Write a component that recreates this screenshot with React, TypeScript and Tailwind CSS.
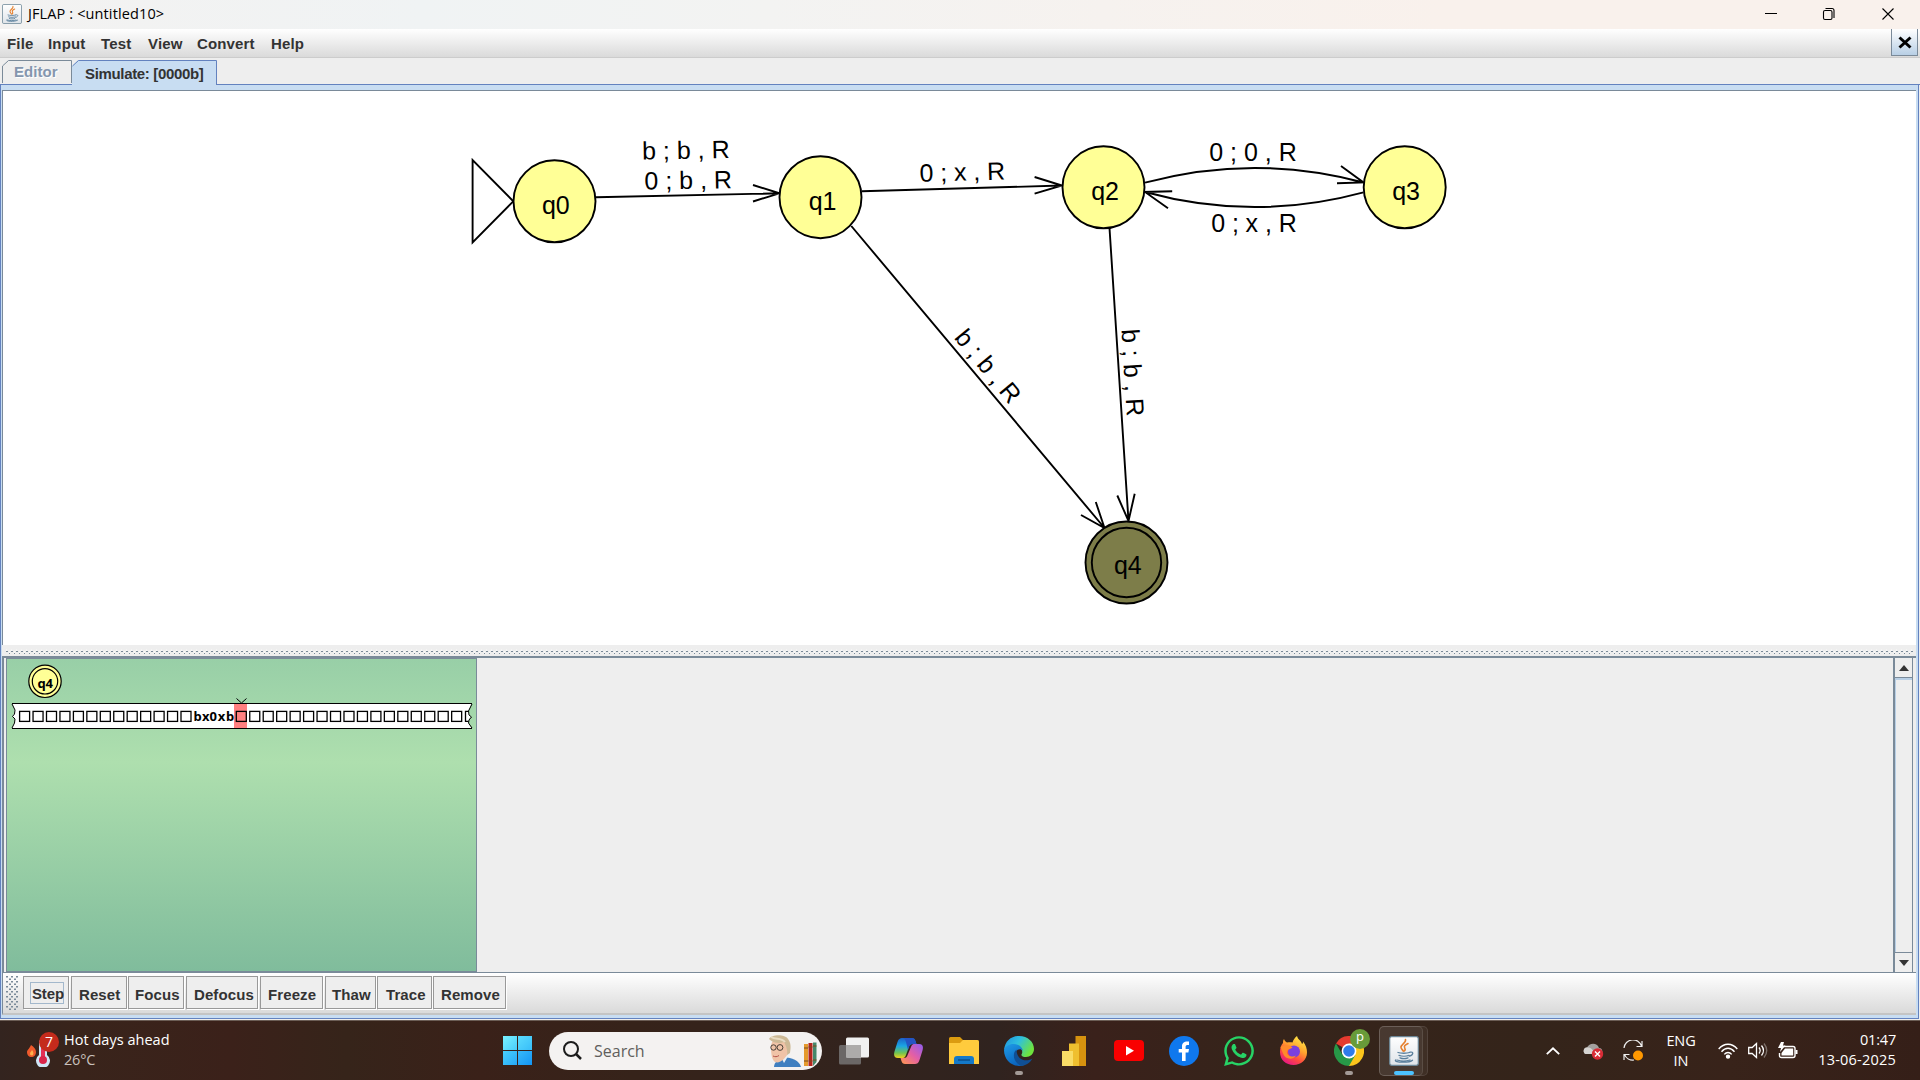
import React from "react";
import { FaWhatsapp } from "react-icons/fa";

type Line = { x: number; y: number; a?: number; w?: number; t: string };

const menus: { t: string; w: string }[] = [
  { t: "File", w: "w-[41px]" },
  { t: "Input", w: "w-[53px]" },
  { t: "Test", w: "w-[47px]" },
  { t: "View", w: "w-[49px]" },
  { t: "Convert", w: "w-[74px]" },
  { t: "Help", w: "w-[50px]" },
];

const labels: Line[] = [
  { t: "b ; b , R", x: 642.2, y: 159.5, a: -1 },
  { t: "0 ; b , R", x: 644.6, y: 189.6, a: -1 },
  { t: "0 ; x , R", x: 919.8, y: 181.8, a: -1.6, w: 85.5 },
  { t: "0 ; 0 , R", x: 1209.2, y: 161.3 },
  { t: "0 ; x , R", x: 1211.2, y: 232, w: 85.5 },
  { t: "b ; b , R", x: 953.5, y: 338, a: 50.2 },
  { t: "b ; b , R", x: 1121.4, y: 329.5, a: 86.4 },
];

const states = [
  { t: "q0", x: 554.5, y: 201.3, tx: 542, ty: 213.7 },
  { t: "q1", x: 820.5, y: 197.2, tx: 808.8, ty: 209.7 },
  { t: "q2", x: 1103.5, y: 187.3, tx: 1091.3, ty: 199.7 },
  { t: "q3", x: 1404.7, y: 187.3, tx: 1392.3, ty: 199.7 },
];

function Diagram() {
  return (
    <svg className="block h-full w-full" viewBox="3 91 1912 554" preserveAspectRatio="xMinYMin" fontFamily="Liberation Sans, Arial, sans-serif" fontSize="25">
      <g fill="none" stroke="#000" strokeWidth="1.9">
        <path d="M472.6 160V242.5L513.3 201.3Z" />
        <path d="M596 197.3 779.5 193.3M753 185l26.5 8.3L753 201.5" />
        <path d="M862 191.3 1062 185.5M1034.6 177l27.4 8.5-27.4 8.2" />
        <path d="M1145 182.7Q1254 153.3 1363.5 182.5M1341 166l22.5 16.5L1337 183.3" />
        <path d="M1363.5 192.3Q1254 222 1145 192M1168 208.3 1145 192l27.2-.7" />
        <path d="M851.3 226 1104.5 528M1081 515l23.500 13-8.700-26" />
        <path d="M1109.5 228 1128.5 521M1117.3 495.5l11.2 25.5 6.2-27.3" />
        {states.map((s) => (
          <circle key={s.t} cx={s.x} cy={s.y} r="41" fill="#ffff96" />
        ))}
        <circle cx="1126.5" cy="562.5" r="41" fill="#7d7d49" />
        <circle cx="1126.5" cy="562.5" r="34.7" />
      </g>
      {states.map((s) => (
        <text key={s.t} x={s.tx} y={s.ty} textLength="27.600">{s.t}</text>
      ))}
      <text x="1114" y="574" textLength="27.600">q4</text>
      {labels.map((l, i) => (
        <text key={i} transform={`translate(${l.x} ${l.y}) rotate(${l.a ?? 0})`} textLength={l.w ?? 87.5}>
          {l.t}
        </text>
      ))}
    </svg>
  );
}

function Tape() {
  const before = Array.from({ length: 13 }, (_, i) => 12.5 + i * 13.45);
  const after = Array.from({ length: 17 }, (_, i) => 229.3 + i * 13.46);
  const word: [string, number][] = [["b", 186.5], ["x", 195], ["0", 202.6], ["x", 210.8], ["b", 219]];
  return (
    <svg className="block h-[80px] w-[469px]" viewBox="0 0 469 80">
      <circle cx="38" cy="22.3" r="16.2" fill="#ffff96" stroke="#000" strokeWidth="1.2" />
      <circle cx="38" cy="22.3" r="12.7" fill="none" stroke="#000" strokeWidth="1.2" />
      <text x="30.5" y="28.700" fontFamily="Noto Sans, sans-serif" fontWeight="700" fontSize="13" textLength="15.5">q4</text>
      <path d="M5.5 44.5H464.5L461.5 52 462.5 56 464 58 462 60 461.5 64 464.5 69.5H5L8 62 7.5 59 5.5 57 7.5 54V50Z" fill="#fff" />
      <rect x="227" y="45" width="13" height="24" fill="#ff8080" />
      <path d="M229.5 39.5l5 4.5 5-4.5" fill="none" stroke="#000" />
      <g fill="none" stroke="#000" strokeWidth="1.3">
        {before.map((x) => (
          <rect key={x} x={x + 0.1} y="52.4" width="10" height="10" />
        ))}
        {after.map((x) => (
          <rect key={x} x={x} y="52.4" width="10" height="10" />
        ))}
        <path d="M461.5 52.400H458.500v10H461.500" />
      </g>
      <path d="M465 45 461.5 52 462 56 464.5 58 462 61 461.5 64 465 69" fill="none" stroke="#000" />
      <path d="M5 45 8 51 7.5 55 5.5 57.5 8 60 7.5 64 5 69" fill="none" stroke="#000" />
      <path d="M5 44.5H465M5 69.5H465" stroke="#000" strokeWidth="1.2" />
      <g fontFamily="Noto Sans, sans-serif" fontWeight="700" fontSize="13">
        {word.map(([c, x]) => (
          <text key={x} x={x} y="62.2">{c}</text>
        ))}
      </g>
    </svg>
  );
}

function JavaCup({ className }: { className: string }) {
  return (
    <svg className={className} viewBox="0 0 30 30">
      <defs>
        <linearGradient id="jv" x2="0" y2="1">
          <stop stopColor="#fff" />
          <stop offset="1" stopColor="#dfe4e9" />
        </linearGradient>
      </defs>
      <rect x=".7" y=".7" width="28.6" height="28.6" rx="2" fill="url(#jv)" stroke="#6c8797" strokeWidth="1.2" />
      <g fill="none" strokeLinecap="round">
        <path d="M16.5 3.5c1 3.5-5 5-4.5 8 .2 1.600 2 2.500 2.200 3.700M19 7.500c-3 1.400-4.200 2.800-3.300 4.300.8 1.300.6 2.300-.3 3.200" stroke="#e6802e" strokeWidth="1.600" />
        <path d="M9 16.500c2.500 1 9 1 11.500 0M10 19.300c2.500 1 7.500 1 10 0M11 21.800c2 .8 6 .8 8 0M21 16.200c4-1 3.500 3-.5 4M6.500 24c-1.500 2.800 14 3 17 .2M8 24c3.500 1.200 9.500 1.200 13 0" stroke="#5a7f9c" strokeWidth="1.300" />
      </g>
    </svg>
  );
}

function Slot({ children, dot }: { children: React.ReactNode; dot?: boolean }) {
  return (
    <div className="relative flex h-[60px] w-[55px] items-center justify-center">
      {children}
      {dot && <div className="absolute bottom-[6px] left-[24px] h-1 w-2 rounded-full bg-[#a39a96]" />}
    </div>
  );
}

function Edge() {
  return (
    <svg className="h-[30px] w-[30px]" viewBox="0 0 30 30">
      <defs>
        <linearGradient id="ed1" x1="0" y1="0" x2="1" y2=".5">
          <stop stopColor="#1d8ee0" />
          <stop offset=".5" stopColor="#2fc0de" />
          <stop offset="1" stopColor="#6ee33d" />
        </linearGradient>
        <linearGradient id="ed2" x1="0" y1="0" x2=".5" y2="1">
          <stop stopColor="#1f9ce8" />
          <stop offset="1" stopColor="#0a63bd" />
        </linearGradient>
      </defs>
      <path d="M0 14C1 5 7 0 15 0c9 0 15 6 15 13 0 5-4 8-8 8-3 0-5-1-4.500-2.500C20 15 16 9 10 9 5 9 1 12 0 14Z" fill="url(#ed1)" />
      <path d="M0 14c1-3.500 5-6 9.500-6 6 0 9 4 9.500 7-2-3-7-2-7.500 2.500C11 23 16 27.500 21 28.700 10 33 0 25 0 14Z" fill="url(#ed2)" />
      <path d="M12.500 13.500C8 17 9 26 17 29.800c5 0 9-3 11.500-7.300C25 25 13 27 12.500 13.500Z" fill="#104f94" />
    </svg>
  );
}

function Copilot() {
  return (
    <svg className="h-[28px] w-[29px]" viewBox="0 0 29 28">
      <defs>
        <linearGradient id="cp1" x2="0" y2="1">
          <stop stopColor="#1b62c9" />
          <stop offset=".4" stopColor="#1aa5e5" />
          <stop offset=".75" stopColor="#6fc451" />
          <stop offset="1" stopColor="#f2d01e" />
        </linearGradient>
        <linearGradient id="cp2" x1="1" x2="0" y2="1">
          <stop stopColor="#8f5df0" />
          <stop offset=".5" stopColor="#e45fa5" />
          <stop offset="1" stopColor="#ff9a4c" />
        </linearGradient>
      </defs>
      <path d="M8 1h10c3 0 3.500 3 4.500 6h-4c-2 0-3 1-3.600 3L12 18c-.8 2.500-2 3-4 3H4c-4 0-4.500-3-3.500-6.500l3-9.500C4.500 2 6 1 8 1Z" fill="url(#cp1)" />
      <path d="M18 1c3 0 3.500 3 4.500 6h-4c-2 0-3 1-3.600 3L14 13 12 5c-.6-2-1.600-4-4-4Z" fill="#2454c4" />
      <path d="M21 27H11c-3 0-3.500-3-4.500-6H10c2 0 3-1 3.600-3L17 10c.8-2.500 2-3 4-3h4c4 0 4.500 3 3.500 6.500l-3 9.500c-1 3-2.500 4-4.500 4Z" fill="url(#cp2)" />
    </svg>
  );
}

function Firefox() {
  return (
    <svg className="h-[30px] w-[29px]" viewBox="0 0 29 30">
      <defs>
        <linearGradient id="ff" x1=".8" x2=".25" y2="1">
          <stop stopColor="#fff04a" />
          <stop offset=".4" stopColor="#ffa52e" />
          <stop offset=".7" stopColor="#ff4b3f" />
          <stop offset="1" stopColor="#e3128c" />
        </linearGradient>
      </defs>
      <path d="M18 0c1 4 4 4 5 8 1-.5 1-1 1-2.500 3 4 4 7 4 11C28 24 22 29 14.500 29S1 24 1 16C1 12 2 9 4 7c0-1 0-3 1-4 .5 2 2 3 3 3.500C10 6 12 6 13.500 6.500 14 4 16 1.500 18 0Z" fill="url(#ff)" />
      <circle cx="15" cy="15.500" r="6" fill="#7a40dd" />
      <path d="M1.500 11c4-2 8-3 12 .500-1.500 2-5 1-5.500 4-.8 4 5 6.500 9 4-3 5-11 4-13-2Z" fill="#ff8a2b" />
    </svg>
  );
}

function Chrome() {
  return (
    <svg className="h-[30px] w-[30px]" viewBox="0 0 30 30">
      <path d="M15 15 2 7.500A15 15 0 0 1 28 7.500Z" fill="#e53a2f" />
      <path d="M15 15V7.500h13A15 15 0 0 1 15 30Z" fill="#fcc51c" />
      <path d="M2 7.500 8.500 18.750 15 22.500 21.500 18.750 15 30A15 15 0 0 1 2 7.500Z" fill="#279847" />
      <circle cx="15" cy="15" r="7.400" fill="#fff" />
      <circle cx="15" cy="15" r="5.800" fill="#2f7bea" />
    </svg>
  );
}

function Person() {
  return (
    <svg className="h-[34px] w-[50px]" viewBox="0 0 50 34">
      <path d="M6 33c0-5 5-8 10-10 8 1 15 3 17 10Z" fill="#3f7fc0" />
      <path d="M13 23l3 6 6-10-4-2Z" fill="#eaf0f5" />
      <path d="M3 11c0 6 0 14 4 17 5 2 11-4 13-9V6L5 6Z" fill="#f0c3a7" />
      <path d="M1 5C4 0 17 0 20 5c3 4 3 8 2 14l-3 2c1-5-1-9-3-13C11 10 5 9 1 5Z" fill="#cdb996" />
      <path d="M3 3c5 3 10 0 14 5" stroke="#e9dcc3" strokeWidth="2" fill="none" />
      <g fill="none" stroke="#4b4038" strokeWidth="1">
        <circle cx="5.500" cy="13.500" r="2.700" />
        <circle cx="12" cy="13.500" r="2.900" />
      </g>
      <path d="M5 22c2 1 4 1 6-.500" stroke="#b3524a" fill="none" />
      <path d="M36 10h4v22h-4Z" fill="#e59a2c" />
      <path d="M40.500 9h4v23h-4Z" fill="#b3241d" />
      <path d="M45 8.500h3.500V28L45 32Z" fill="#46876a" />
      <path d="M36 14h4M36 27h4M40.500 13h4M40.500 27h4M45 12h3.500M45 26h3.500" stroke="#7b4a1c" />
    </svg>
  );
}

const toolButtons = [
  { t: "Reset", c: "ml-[2px] w-[56px] pl-[7px]" },
  { t: "Focus", c: "ml-[1px] w-[56px] pl-[6px]" },
  { t: "Defocus", c: "ml-[2px] w-[72px] pl-[7px]" },
  { t: "Freeze", c: "ml-[2px] w-[63px] pl-[7px]" },
  { t: "Thaw", c: "ml-[2px] w-[51px] pl-[6px]" },
  { t: "Trace", c: "ml-[1px] w-[55px] pl-[8px]" },
  { t: "Remove", c: "ml-[1px] w-[73px] pl-[7px]" },
];

export default function App() {
  return (
    <div className="flex h-[1080px] w-[1920px] flex-col overflow-hidden bg-[#eeeeee] font-['Liberation_Sans',Arial,sans-serif] text-[15px] text-[#333333]">
      <header className="flex h-[29px] shrink-0 items-center bg-[linear-gradient(90deg,#f3f2f1_0%,#f0f3f4_22%,#f3f3f2_40%,#f9f1ec_75%)] pb-px">
        <JavaCup className="ml-[2px] h-[20px] w-[20px]" />
        <span className="ml-[6px] whitespace-pre font-['Open_Sans',sans-serif] text-[14.5px] tracking-[0.12px] text-black">JFLAP : &lt;untitled10&gt;</span>
        <div className="ml-auto flex items-center pr-[25px] text-black">
          <svg className="h-[14px] w-[132px]" viewBox="0 0 132 14" fill="none" stroke="#000" strokeWidth="1.100">
            <path d="M2 6.500h12M119.500 1.500l11 11M130.500 1.500l-11 11" />
            <rect x="60.500" y="3.500" width="8.500" height="9" rx="1.500" />
            <path d="M62.500 1.500H69q2 0 2 2V11" />
          </svg>
        </div>
      </header>

      <nav className="flex h-[28px] shrink-0 items-stretch bg-gradient-to-b from-white to-[#dadada] pl-[7px] font-bold">
        {menus.map((m) => (
          <span key={m.t} className={`${m.w} pt-[3px] leading-[24px] tracking-[0.15px]`}>{m.t}</span>
        ))}
        <button className="ml-auto mr-[2px] mb-px flex w-[27px] items-center justify-center border border-t-0 border-[#7a8a99] bg-gradient-to-b from-white to-[#b8cfe5]">
          <svg className="h-[13px] w-[14px]" viewBox="0 0 14 13">
            <path d="M1.500 1.500l11 10M12.500 1.500l-11 10" stroke="#000" strokeWidth="3" />
          </svg>
        </button>
      </nav>
      <div className="h-px shrink-0 bg-[#cccccc]" />

      <div className="flex h-[27px] shrink-0 items-end border-b border-[#6382bf] pl-[2px] font-bold">
        <div className="relative flex h-[24px] w-[70px] items-center">
          <svg className="absolute inset-0 h-full w-full" viewBox="0 0 70 24" fill="none">
            <path d="M.5 23V6L6.500.500H69.500V23" stroke="#7a8a99" />
          </svg>
          <span className="relative ml-[12px] tracking-[0.05px] text-[#8496ae] [text-shadow:1px_1px_0_#fff]">Editor</span>
        </div>
        <div className="relative -mb-[2px] flex h-[26px] w-[145px] items-center">
          <svg className="absolute inset-0 h-full w-full" viewBox="0 0 145 26">
            <path d="M0 26V6L6 0H144V26Z" fill="#c8ddf2" />
            <path d="M.5 6 6.500.500H144.500V24" fill="none" stroke="#6382bf" />
          </svg>
          <span className="relative ml-[13px] mt-[2px] tracking-[-0.34px]">Simulate: [0000b]</span>
        </div>
      </div>

      <div className="mr-px flex h-[934px] shrink-0 flex-col border-x border-b border-[#6382bf] bg-[#c8ddf2] pt-px">
        <div className="mb-[3px] mr-[2px] ml-px flex min-h-0 flex-1 flex-col border-t-[4px] border-[#c8ddf2] bg-[#eeeeee]">
          <main className="h-[555px] shrink-0 border-l border-t border-[#7a8a99] bg-white">
            <Diagram />
          </main>
          <div className="flex h-[11px] shrink-0 items-center pl-[4px]">
            <svg className="mt-[2px] h-[6px] w-[1908px]">
              <defs>
                <pattern id="grip" width="5" height="6" patternUnits="userSpaceOnUse">
                  <path d="M0 2.500h2M3 4.500h1" stroke="#7a8a99" />
                  <path d="M0 1h1M3 3h1" stroke="#fff" />
                </pattern>
              </defs>
              <rect width="1908" height="6" fill="url(#grip)" />
            </svg>
          </div>

          <section className="flex h-[317px] shrink-0 border-b border-l-2 border-t-2 border-[#7a8a99]">
            <div className="ml-[2px] w-[471px] border-x border-t border-b border-[#7a8a99] bg-[linear-gradient(180deg,#98cfa7_0%,#aedfae_33%,#80bc9c_100%)]">
              <Tape />
            </div>
            <div className="flex-1" />
            <div className="mr-[3px] flex w-[20px] flex-col border-l-2 border-r border-[#7a8a99] bg-[#eeeeee]">
              <div className="flex h-[19px] items-center justify-center">
                <svg className="h-[6px] w-[10px]" viewBox="0 0 10 6"><path d="M0 6 5 0l5 6Z" fill="#333" /></svg>
              </div>
              <div className="flex-1 border-y border-[#7a8a99]">
                <div className="h-full border-l border-t-2 border-[#b8cfe5]" />
              </div>
              <div className="flex h-[19px] items-center justify-center">
                <svg className="h-[6px] w-[10px]" viewBox="0 0 10 6"><path d="M0 0 5 6l5-6Z" fill="#333" /></svg>
              </div>
            </div>
          </section>

          <footer className="flex min-h-0 flex-1 items-start border-b-2 border-l border-b-[#c4c4c4] border-l-[#7a8a99] bg-gradient-to-b from-white to-[#dadada] pl-[3px] pt-[3px] font-bold">
            <svg className="h-[35px] w-[14px]">
              <defs>
                <pattern id="bumps" width="5" height="5" patternUnits="userSpaceOnUse">
                  <path d="M0 .750h2M3 3.250h2" stroke="#7a8a99" strokeWidth="1.500" />
                </pattern>
              </defs>
              <rect width="13" height="35" fill="url(#bumps)" />
            </svg>
            <button className="ml-[3px] flex h-[33px] w-[46px] items-center border border-[#999] bg-[#eeeeee] pl-[6px] pt-[1px] font-bold shadow-[1px_1px_0_#fff]">
              <span className="flex h-[22px] w-[34px] items-center border border-[#a3b8cc] pl-px pt-[3px] tracking-[-0.15px]">Step</span>
            </button>
            {toolButtons.map((b) => (
              <button key={b.t} className={`${b.c} flex h-[33px] items-center border border-[#999] bg-[#eeeeee] pt-[5px] text-left font-bold tracking-[0.1px] shadow-[1px_1px_0_#fff]`}>
                {b.t}
              </button>
            ))}
          </footer>
        </div>
      </div>
      <div className="h-px shrink-0 bg-[#eeeeee]" />

      <div className="relative flex h-[60px] items-center border-t border-[#6b5d55] bg-[linear-gradient(90deg,#33241f_0%,#39241b_4%,#3b211a_12%,#36241a_18%,#3a2119_25%,#36231a_33%,#30231f_52%,#3a211b_57%,#36241b_65%,#34241a_80%,#38231a_90%,#351f18_100%)] font-['Open_Sans',sans-serif] text-white">
        <div className="flex w-[503px] items-center pl-[26px]">
          <div className="relative -mt-[4px] h-[36px] w-[34px]">
            <svg className="h-full w-full" viewBox="0 0 34 36">
              <path d="M5 14c3 2 5 4 5 7 0 3-2 5-4.500 5S1 24 1 21c0-2 3-4 4-7Z" fill="#ef5a2c" />
              <path d="M6 19c1 1 2 3 1 5-1 1-3 0-3-1 0-2 1-2 2-4Z" fill="#ffb04a" />
              <path d="M13 10q4-4 8 0v14a7 7 0 1 1-8 0Z" fill="#cfe6f7" />
              <path d="M15 14h4v13h-4Z" fill="#e32f55" />
              <circle cx="17" cy="29" r="4" fill="#d9254a" />
            </svg>
            <div className="absolute left-[13px] top-[1px] flex h-[20px] w-[20px] items-center justify-center rounded-full bg-[#c42b1c] text-[14px]">7</div>
          </div>
          <div className="ml-[4px] -mt-[2px] text-[14.500px] leading-[20px]">
            <div className="tracking-[0.02px]">Hot days ahead</div>
            <div className="tracking-[-0.2px] text-[#c9c1bd]">26°C</div>
          </div>
        </div>
        <div className="grid h-[29px] w-[29px] grid-cols-2 gap-px">
          <div className="bg-gradient-to-br from-[#79f2ff] to-[#48cdfb]" />
          <div className="bg-gradient-to-br from-[#5bdcfd] to-[#37bdf9]" />
          <div className="bg-gradient-to-br from-[#48d0fc] to-[#27a9f7]" />
          <div className="bg-gradient-to-br from-[#37b9f9] to-[#1295f4]" />
        </div>
        <div className="ml-[17px] flex h-[38px] w-[273px] items-center rounded-full bg-[#f4f2f1] pl-[14px] pr-[4px]">
          <svg className="h-[19px] w-[19px]" viewBox="0 0 19 19" fill="none" stroke="#1c1c1c" strokeWidth="2">
            <circle cx="8" cy="8" r="7" />
            <path d="M13 13l5 5" strokeWidth="2.500" />
          </svg>
          <span className="ml-[12px] text-[16px] text-[#605e5c]">Search</span>
          <div className="ml-auto"><Person /></div>
        </div>
        <div className="ml-[4px] flex">
          <Slot>
            <svg className="h-[28px] w-[30px]" viewBox="0 0 30 28">
              <rect y="8" width="22" height="19.500" rx="1.500" fill="#6b6766" />
              <rect x="7" y=".5" width="23" height="20" rx="1.500" fill="#f1f1f1" />
              <path d="M7 8h15v12.500H7Z" fill="#adabaa" />
            </svg>
          </Slot>
          <Slot><Copilot /></Slot>
          <Slot>
            <svg className="h-[27px] w-[30px]" viewBox="0 0 30 27">
              <path d="M0 1.500Q0 0 1.500 0H11l3 3H28q2 0 2 2v6H0Z" fill="#dc9c10" />
              <path d="M0 6h11l3-3H28q2 0 2 2v22H0Z" fill="#ffcb3d" />
              <path d="M5 27v-5q0-3 3-3h14q3 0 3 3v5Z" fill="#1479c9" />
              <path d="M9 23h12" stroke="#0a4f8b" strokeWidth="1.500" />
            </svg>
          </Slot>
          <Slot dot><Edge /></Slot>
          <Slot>
            <svg className="h-[30px] w-[24px]" viewBox="0 0 24 30">
              <path d="M13.500 0H24v30H13.500Z" fill="#d6920f" />
              <path d="M7 7.500h10V30H7Z" fill="#efbf2f" />
              <path d="M0 15h11v15H0Z" fill="#f9dc66" />
            </svg>
          </Slot>
          <Slot>
            <svg className="h-[21px] w-[30px]" viewBox="0 0 30 21">
              <rect width="30" height="21" rx="4" fill="#f90000" />
              <path d="M12 6l8 4.700-8 4.700Z" fill="#fff" />
            </svg>
          </Slot>
          <Slot>
            <svg className="h-[30px] w-[30px]" viewBox="0 0 30 30">
              <circle cx="15" cy="15" r="15" fill="#0f78ee" />
              <path d="M13 25v-8.500H9.700V13H13v-2.500C13 6.500 15.500 5 20 5.500V9c-2.500-.2-3.400.3-3.400 2V13H20l-.6 3.500h-2.800V25Z" fill="#fff" />
            </svg>
          </Slot>
          <Slot><FaWhatsapp className="h-[34px] w-[34px] text-[#27d366]" /></Slot>
          <Slot><Firefox /></Slot>
          <Slot dot>
            <Chrome />
            <div className="absolute left-[29px] top-[8px] flex h-[20px] w-[20px] items-center justify-center rounded-full bg-[#689b39] pb-[3px] text-[13px]">p</div>
          </Slot>
          <Slot>
            <div className="absolute left-[3px] top-[5px] h-[50px] w-[49px] rounded-[5px] border border-white/10 bg-white/5" />
            <div className="absolute left-[3px] top-[5px] h-[50px] w-[44px] rounded-[5px] border border-white/10 bg-white/5" />
            <JavaCup className="relative h-[30px] w-[30px]" />
            <div className="absolute bottom-[6px] left-[18px] h-1 w-5 rounded-full bg-[#4cc2ff]" />
          </Slot>
        </div>

        <div className="ml-auto flex items-center pr-[24px] text-[14.500px] leading-[20px]">
          <svg className="h-[8px] w-[14px]" viewBox="0 0 14 8" fill="none" stroke="#fff" strokeWidth="1.800">
            <path d="M.8 7.200 7 1.300l6.200 5.900" />
          </svg>
          <svg className="ml-[23px] h-[20px] w-[21px]" viewBox="0 0 21 20">
            <path d="M2.500 13C-1 11 1 6 4 6.500 6 2 14 1 16 7c3 0 4 3 3 6Z" fill="#a3a09e" />
            <path d="M2.500 13C-1 11 1 6 4 6.500c3-.5 5 1 6 3V13Z" fill="#d5d3d1" />
            <circle cx="14.500" cy="13" r="5.700" fill="#d82b35" />
            <path d="M12 10.500l5 5M17 10.500l-5 5" stroke="#fff" strokeWidth="1.400" />
          </svg>
          <svg className="ml-[19px] h-[21px] w-[21px]" viewBox="0 0 21 21" fill="none" stroke="#eee" strokeWidth="1.200">
            <path d="M1 8A9 9 0 0 1 18.500 6M19 1v5.500h-5.500M1 20v-5.500h5.500M1.500 14.500A9 9 0 0 0 11 20" />
            <circle cx="15" cy="15.500" r="5" fill="#ff9800" stroke="none" />
          </svg>
          <div className="ml-[19px] w-[36px] text-center tracking-[-0.1px]">
            <div>ENG</div>
            <div>IN</div>
          </div>
          <svg className="ml-[19px] h-[16px] w-[20px]" viewBox="0 0 20 16" fill="none" stroke="#fff" strokeWidth="1.400">
            <path d="M.7 6C6-.4 14-.4 19.300 6M3.500 8.700c4-4.600 9-4.600 13 0M6.300 11.400c2.200-2.600 5.200-2.600 7.400 0" />
            <circle cx="10" cy="13.600" r="1.500" fill="#fff" />
          </svg>
          <svg className="ml-[10px] h-[17px] w-[20px]" viewBox="0 0 20 17" fill="none" stroke="#fff" strokeWidth="1.300">
            <path d="M.7 5.500h3.500L8.500 1.500v14L4.200 11.500H.7Z" />
            <path d="M11 5.500q2.300 3 0 6M13.500 3.500q4 5 0 10" />
            <path d="M16 1.500q5.500 7 0 14" stroke="#7d716b" />
          </svg>
          <svg className="ml-[10px] h-[17px] w-[20px]" viewBox="0 0 20 17">
            <path d="M6 4.500h9q2 0 2 2v7q0 2-2 2H3.500q-2 0-2-2V11" fill="none" stroke="#fff" strokeWidth="1.400" />
            <path d="M7 6.500h8.200v7H3.500V11Z" fill="#fff" />
            <path d="M17.500 8h2v4h-2ZM3 0h3L5 3.500h2.500L2 10l1-4H0Z" fill="#fff" />
          </svg>
          <div className="ml-[15px] w-[83px] text-right">
            <div className="-mt-[2px] tracking-[-0.2px]">01:47</div>
            <div className="whitespace-nowrap tracking-[0.220px]">13-06-2025</div>
          </div>
        </div>
      </div>
    </div>
  );
}
